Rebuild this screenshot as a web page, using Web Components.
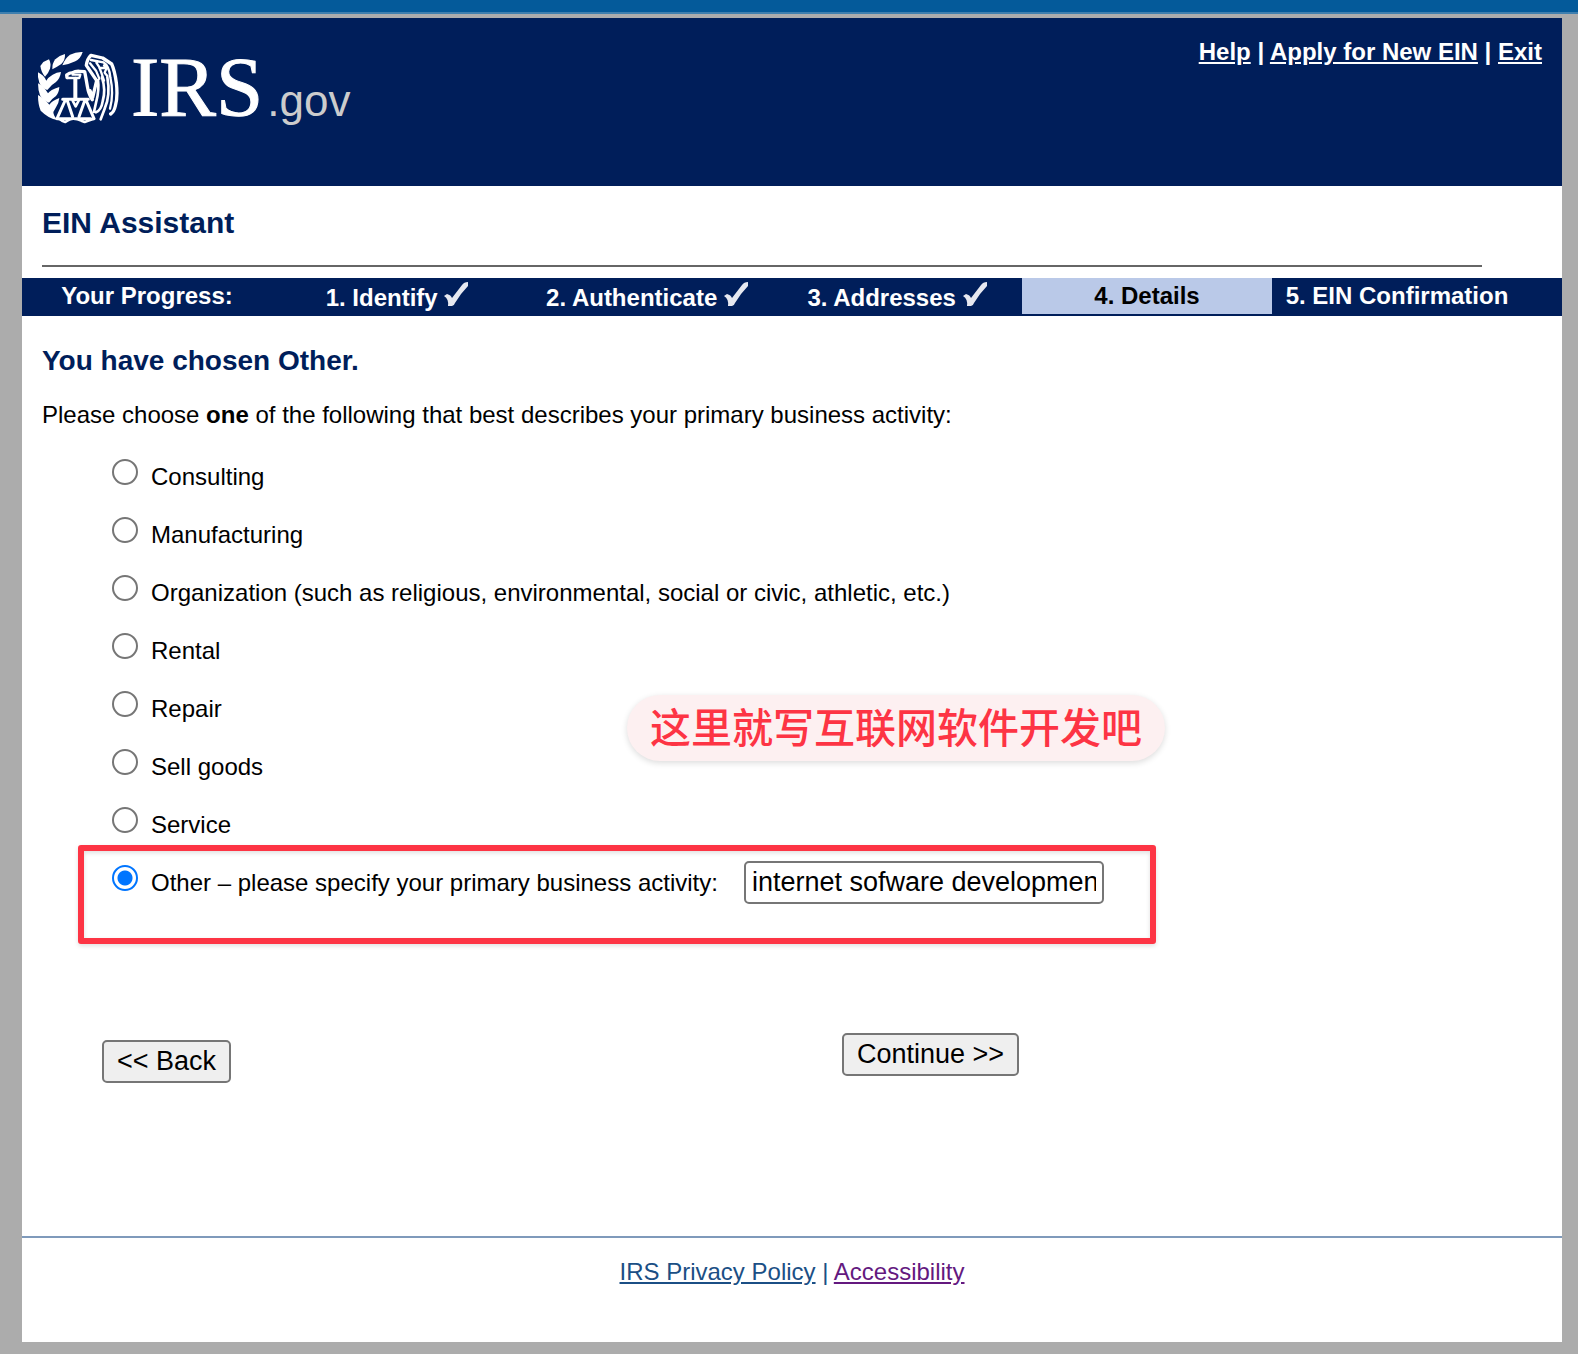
<!DOCTYPE html>
<html lang="en">
<head>
<meta charset="utf-8">
<title>EIN Assistant</title>
<style>
  body {
    margin: 0;
    background: #acacac;
    color: #000;
    font: 24px/28px "Liberation Sans", Arial, sans-serif;
    --navy: #001e5a;
  }
</style>
</head>
<body>
<ein-page>
  <ein-header slot="header">
    <a href="#help">Help</a> | <a href="#apply">Apply for New EIN</a> | <a href="#exit">Exit</a>
  </ein-header>
  <ein-title>EIN Assistant</ein-title>
  <ein-progress>
    <ein-step>Your Progress:</ein-step>
    <ein-step done>1. Identify</ein-step>
    <ein-step done>2. Authenticate</ein-step>
    <ein-step done>3. Addresses</ein-step>
    <ein-step current>4. Details</ein-step>
    <ein-step>5. EIN Confirmation</ein-step>
  </ein-progress>
  <ein-activity-form>
    <span slot="heading">You have chosen Other.</span>
    <span slot="intro">Please choose <b>one</b> of the following that best describes your primary business activity:</span>
    <ein-note slot="note" lang="zh-CN">这里就写互联网软件开发吧</ein-note>
  </ein-activity-form>
  <ein-footer slot="footer"></ein-footer>
</ein-page>

<script>
const component = (name, html) => {
  const template = document.createElement('template');
  template.innerHTML = html;
  customElements.define(name, class extends HTMLElement {
    constructor() {
      super();
      this.attachShadow({ mode: 'open' }).append(template.content.cloneNode(true));
    }
  });
};

component('ein-page', `
  <style>
    :host { display: block; border-top: 12px solid #045a9a; }
    .edge { height: 2px; background: #3f7fae; }
    .sheet { margin: 4px 16px 12px 22px; background: #fff; }
    main { display: block; }
  </style>
  <div class="edge"></div>
  <div class="sheet">
    <slot name="header"></slot>
    <main><slot></slot></main>
    <slot name="footer"></slot>
  </div>`);

component('ein-logo', `
  <style>
    :host { display: flex; align-items: flex-start; color: #fff; }
    svg { width: 82px; height: 76px; margin: 32px 12px 0 0; }
    .brand { display: flex; align-items: baseline; gap: 4px; padding-top: 20px; }
    .irs { font: 85px/98px "Liberation Serif", "Times New Roman", serif; -webkit-text-stroke: 1px #fff; }
    .gov { font: 44px/50px "Liberation Sans", Arial, sans-serif; color: #ccc; }
  </style>
  <svg viewBox="21 30 246 228" aria-hidden="true">
    <g fill="#fff">
      <path d="M97 76Q104 56 120 44Q138 35 158 36Q152 56 136 64Q120 72 97 76Z"/>
      <path d="M67 88Q66 70 76 58Q88 46 105 42Q106 60 94 72Q82 80 67 88Z"/>
      <path d="M45 110Q34 98 31 78L40 66L57 58Q64 70 60 86Q56 98 45 110Z"/>
      <path d="M24 97Q42 106 49 122Q54 112 68 104Q80 97 93 96Q90 116 78 126Q64 134 52 150Q34 144 28 128Q22 112 24 97Z"/>
      <path d="M24 130Q42 140 54 160Q60 150 88 141Q87 158 78 168Q66 176 57 188Q40 184 30 166Q24 150 24 130Z"/>
      <path d="M24 165Q42 174 58 194Q66 182 88 174Q86 192 78 202L70 216Q70 226 82 240Q56 236 32 212Q24 194 24 165Z"/>
    </g>
    <g fill="none" stroke="#fff" stroke-width="10" stroke-linejoin="round" stroke-linecap="round">
      <path d="M111 113L110 105Q118 98 128 98Q136 93 149 94L164 95Q169 120 172 139Q176 164 187 179"/>
      <path d="M111 114H148L151 104L128 104" stroke-width="7"/>
      <path d="M136 116V178" stroke-width="12"/>
      <path d="M98 178H175M106 180L81 236M112 182L128 230M164 182L147 230M168 180L192 236" stroke-width="9"/>
      <path d="M81 236Q90 236 96 242L106 246Q120 236 130 236Q142 236 154 242L164 246Q174 242 192 236M90 236H182" stroke-width="8"/>
      <path d="M128 182L137 199L146 182" stroke-width="8"/>
      <path d="M180 152L188 172L200 122L169 76Q172 56 183 46L218 54L245 72Q254 92 259 128Q264 172 256 198Q252 216 242 222"/>
      <path d="M183 60L220 67Q238 78 241 112Q252 162 240 206M180 70L198 92L208 116M199 68L207 80L214 98L222 122M222 76L229 86L224 98L232 108M208 84H223" stroke-width="7"/>
      <path d="M204 120Q208 150 199 184L192 216M216 112Q228 150 218 184Q214 210 198 217M232 112Q242 166 224 206L212 238" stroke-width="8"/>
    </g>
  </svg>
  <div class="brand"><span class="irs">IRS</span><span class="gov">.gov</span></div>`);

component('ein-header', `
  <style>
    :host { display: block; background: var(--navy); color: #fff; font-weight: bold; }
    header { display: flex; justify-content: space-between; align-items: flex-start; min-height: 168px; padding: 0 20px 0 15px; box-sizing: border-box; }
    nav { padding-top: 20px; }
    ::slotted(a) { color: #fff; }
  </style>
  <header><ein-logo></ein-logo><nav><slot></slot></nav></header>`);

component('ein-title', `
  <style>
    :host { display: block; padding: 20px 80px 11px 20px; }
    h1 { margin: 0 0 25px; font-size: 30px; line-height: 34px; color: var(--navy); }
    hr { margin: 0; border: 0; height: 2px; background: #666; }
  </style>
  <h1><slot></slot></h1><hr>`);

component('ein-progress', `
  <style>
    :host { display: grid; grid-template-columns: repeat(6, 1fr); padding: 0 40px 2px 0; background: var(--navy); color: #fff; font-weight: bold; }
  </style>
  <slot></slot>`);

component('ein-step', `
  <style>
    :host { display: block; height: 32px; padding-top: 4px; text-align: center; white-space: nowrap; }
    :host([current]) { background: #bac9e8; color: #000; }
    svg { display: none; width: 24px; height: 24px; }
    :host([done]) svg { display: inline; }
  </style>
  <slot></slot> <svg viewBox="0 0 24 24" role="img" aria-label="done"><path fill="#e6e8f0" d="M0 14L3 12Q7 13 8 16L18 3Q20 0 24 0V4Q17 11 11 21Q10 24 8 24H4Q5 17 0 14Z"/></svg>`);

component('ein-note', `
  <style>
    :host { display: block; padding: 0 23px 6px; border-radius: 33px; background: #fdf0f1; color: #fd3444;
      font: 500 41px/60px "Noto Sans CJK SC", sans-serif; white-space: nowrap; box-shadow: 0 2px 6px rgba(0,0,0,.14); }
  </style>
  <slot></slot>`);

component('ein-button', `
  <style>
    :host { display: block; }
    button { display: block; padding: 4px 13px; border: 2px solid #767676; border-radius: 5px; background: #efefef; color: #000; font: 27px/31px "Liberation Sans", Arial, sans-serif; }
  </style>
  <button type="button"><slot></slot></button>`);

const choices = ['Consulting', 'Manufacturing',
  'Organization (such as religious, environmental, social or civic, athletic, etc.)',
  'Rental', 'Repair', 'Sell goods', 'Service'];

component('ein-activity-form', `
  <style>
    :host { display: block; padding: 29px 20px 153px; }
    h2 { margin: 0 0 24px; font-size: 28px; line-height: 32px; color: var(--navy); }
    p { margin: 0 0 26px; }
    .choices { position: relative; padding-left: 70px; }
    .row { display: flex; align-items: baseline; height: 58px; }
    .row label { padding: 8px 0; }
    input[type=radio] { appearance: none; flex: none; box-sizing: border-box; width: 26px; height: 26px; margin: 0 13px 0 0; border: 2px solid #767676; border-radius: 50%; background: #fff; }
    input[type=radio]:checked { border-color: #0075ff; background: radial-gradient(circle, #0075ff 7px, #fff 8px); }
    input[type=text] { box-sizing: border-box; width: 360px; height: 43px; margin-left: 26px; padding: 0 6px; border: 2px solid #767676; border-radius: 5px; background: #fff; color: #000; font: 27px/31px "Liberation Sans", Arial, sans-serif; }
    .note { position: absolute; left: 585px; top: 240px; }
    .frame { position: absolute; left: 36px; top: 390px; width: 1078px; height: 99px; box-sizing: border-box; border: 6px solid #fd3444; border-radius: 3px; filter: drop-shadow(0 2px 2px rgba(0,0,0,.12)); pointer-events: none; }
    .actions { display: grid; grid-template-columns: 740px auto; justify-content: start; min-height: 50px; padding: 114px 0 0 60px; }
    .back { align-self: end; }
  </style>
  <form>
    <h2><slot name="heading"></slot></h2>
    <p><slot name="intro"></slot></p>
    <div class="choices">
      ${choices.map((text, i) => `<div class="row"><input type="radio" name="activity" id="a${i}"><label for="a${i}">${text}</label></div>`).join('')}
      <div class="row"><input type="radio" name="activity" id="other" checked><label for="other">Other – please specify your primary business activity:</label><input type="text" aria-label="Primary business activity" value="internet sofware development"></div>
      <div class="frame"></div>
      <div class="note"><slot name="note"></slot></div>
    </div>
    <div class="actions">
      <ein-button class="back">&lt;&lt; Back</ein-button>
      <ein-button>Continue &gt;&gt;</ein-button>
    </div>
  </form>`);

component('ein-footer', `
  <style>
    :host { display: block; }
    footer { padding: 20px 0 56px; border-top: 2px solid #7f9abb; text-align: center; color: #1b4f85; }
    a { color: #1b4f85; }
    a.visited { color: #64197f; }
  </style>
  <footer><a href="#privacy">IRS Privacy Policy</a> | <a class="visited" href="#accessibility">Accessibility</a></footer>`);
</script>
</body>
</html>
